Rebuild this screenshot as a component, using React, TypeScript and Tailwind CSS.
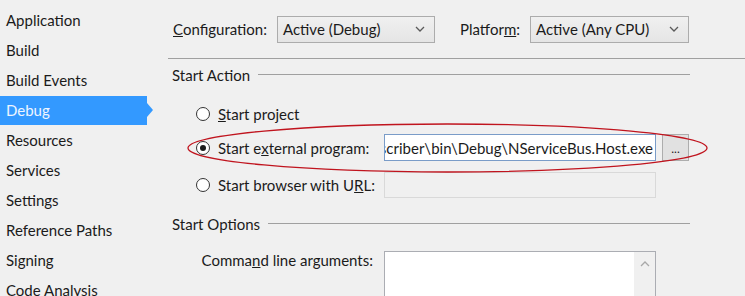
import React from "react";

const font = { fontFamily: "Lato, 'Open Sans', sans-serif" };

const navItems = [
  "Application",
  "Build",
  "Build Events",
  "Debug",
  "Resources",
  "Services",
  "Settings",
  "Reference Paths",
  "Signing",
  "Code Analysis",
];

const Chevron = () => (
  <svg width="10" height="6" viewBox="0 0 10 6" fill="none" stroke="#5a5a5a" strokeWidth="1.3" aria-hidden="true">
    <polyline points="1 1 5 5 9 1" />
  </svg>
);

function Combo({ value, width }: { value: string; width: string }) {
  return (
    <div
      className={`${width} h-[27px] flex items-center justify-between pl-[5px] pr-[9px] border border-[#acacac] bg-gradient-to-b from-[#f0f0f0] to-[#e5e5e5]`}
    >
      <span>{value}</span>
      <Chevron />
    </div>
  );
}

function Radio({ checked }: { checked?: boolean }) {
  return (
    <span className="w-[14px] h-[14px] shrink-0 rounded-full border border-[#333] bg-white flex items-center justify-center">
      {checked && <span className="w-[6px] h-[6px] rounded-full bg-[#1b1b1b]" />}
    </span>
  );
}

function SectionHeader({ title }: { title: string }) {
  return (
    <div className="h-[32px] shrink-0 flex items-center pl-[4px] pr-[55px]">
      <span>{title}</span>
      <span className="flex-1 ml-[8px] border-t border-[#a0a0a0] mt-[-1px]" />
    </div>
  );
}

export default function App() {
  return (
    <div
      className="relative w-[745px] h-[296px] overflow-hidden flex bg-[#f0f0f0] text-[15px] leading-[18px] text-[#1b1b1b]"
      style={font}
    >
      {/* left nav */}
      <nav className="w-[168px] shrink-0 flex flex-col pt-[5px]">
        {navItems.map((item) =>
          item === "Debug" ? (
            <div key={item} className="h-[30px] shrink-0 flex items-center">
              <div className="w-[147px] h-[29px] flex items-center pl-[6px] bg-[#3399ff] text-[#eef5ff]">
                {item}
              </div>
              <svg width="6" height="14" viewBox="0 0 6 14" aria-hidden="true">
                <polygon points="0 0 6 7 0 14" fill="#3399ff" />
              </svg>
            </div>
          ) : (
            <div key={item} className="h-[30px] shrink-0 flex items-center pl-[6px]">
              {item}
            </div>
          )
        )}
      </nav>

      {/* settings page */}
      <main className="flex-1 flex flex-col">
        <div className="h-[59px] shrink-0 flex items-center pl-[5px] border-b border-[#a0a0a0]">
          <span className="w-[104px]">
            <u>C</u>onfiguration:
          </span>
          <Combo value="Active (Debug)" width="w-[158px]" />
          <span className="ml-[25px] w-[70px]">
            Platfor<u>m</u>:
          </span>
          <Combo value="Active (Any CPU)" width="w-[159px]" />
        </div>

        <SectionHeader title="Start Action" />

        <div className="pl-[28px] shrink-0 flex flex-col">
          <div className="mt-[9px] h-[27px] flex items-center">
            <Radio />
            <span className="ml-[8px]">
              <u>S</u>tart project
            </span>
          </div>
          <div className="mt-[7px] h-[27px] flex items-center">
            <div className="w-[188px] flex items-center">
              <Radio checked />
              <span className="ml-[8px]">
                Start e<u>x</u>ternal program:
              </span>
            </div>
            <div className="w-[272px] h-[27px] flex items-center justify-end overflow-hidden border border-[#7a9cc8] bg-white pr-[2px]">
              <span className="shrink-0 whitespace-nowrap">scriber\bin\Debug\NServiceBus.Host.exe</span>
            </div>
            <div className="ml-[6px] w-[27px] h-[27px] flex items-end justify-center pb-[6px] border border-[#adadad] bg-[#e1e1e1] text-[12px] leading-[10px]">
              ...
            </div>
          </div>
          <div className="mt-[10px] h-[27px] flex items-center">
            <div className="w-[188px] flex items-center">
              <Radio />
              <span className="ml-[8px]">
                Start browser with U<u>R</u>L:
              </span>
            </div>
            <div className="w-[272px] h-[26px] border border-[#d9d9d9] bg-[#f0f0f0]" />
          </div>
        </div>

        <div className="mt-[10px] shrink-0">
          <SectionHeader title="Start Options" />
        </div>

        <div className="pl-[28px] mt-[11px] shrink-0 flex items-start">
          <span className="w-[188px] text-right pr-[11px]">
            Comma<u>n</u>d line arguments:
          </span>
          <div className="w-[272px] h-[60px] flex border border-[#abadb3] bg-white">
            <div className="flex-1" />
            <div className="w-[21px] bg-[#f0f0f0] flex justify-center pt-[9px]">
              <svg width="10" height="6" viewBox="0 0 10 6" fill="none" stroke="#a8a8a8" strokeWidth="1.3" aria-hidden="true">
                <polyline points="1 5 5 1 9 5" />
              </svg>
            </div>
          </div>
        </div>
      </main>

      {/* red highlight ellipse drawn over the form */}
      <svg className="absolute left-0 top-0 pointer-events-none" width="745" height="296" aria-hidden="true">
        <ellipse cx="447.5" cy="148" rx="259.5" ry="24" fill="none" stroke="#c0141e" strokeWidth="1.3" />
      </svg>
    </div>
  );
}
